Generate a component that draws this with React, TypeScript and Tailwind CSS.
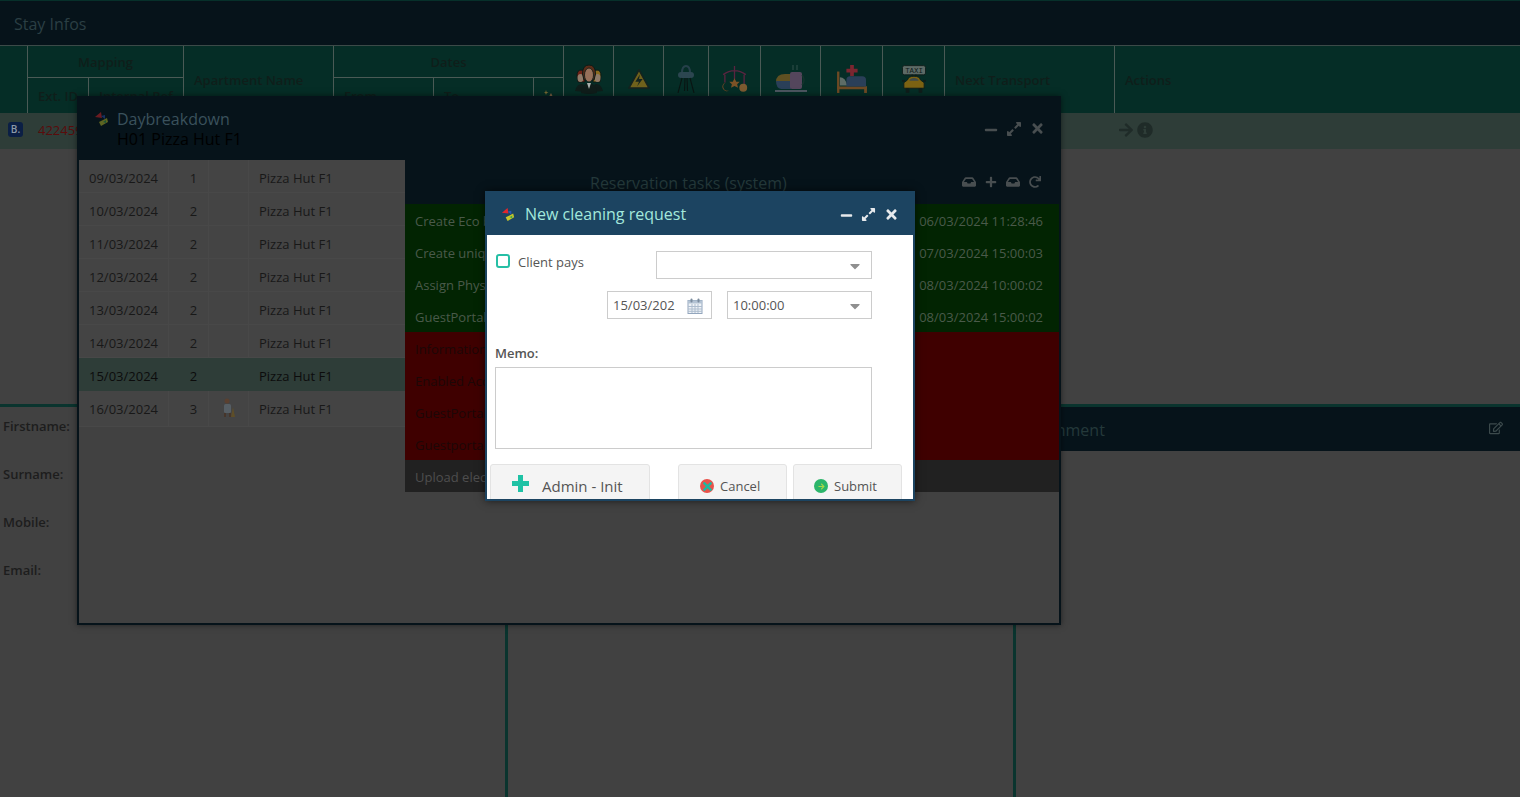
import { FaArrowRight, FaCaretDown, FaExpandAlt, FaInbox, FaInfoCircle, FaMinus, FaPlus, FaRedo, FaRegEdit, FaTimes } from "react-icons/fa";

const days = [
  { date: "09/03/2024", n: 1 },
  { date: "10/03/2024", n: 2 },
  { date: "11/03/2024", n: 2 },
  { date: "12/03/2024", n: 2 },
  { date: "13/03/2024", n: 2 },
  { date: "14/03/2024", n: 2 },
  { date: "15/03/2024", n: 2, active: true },
  { date: "16/03/2024", n: 3, cleaner: true },
];

const tasks = [
  { label: "Create Eco booking", time: "06/03/2024 11:28:46", done: true },
  { label: "Create unique code", time: "07/03/2024 15:00:03", done: true },
  { label: "Assign Physical unit", time: "08/03/2024 10:00:02", done: true },
  { label: "GuestPortal mail", time: "08/03/2024 15:00:02", done: true },
  { label: "Information mail", time: "", done: false },
  { label: "Enabled Access", time: "", done: false },
  { label: "GuestPortal reminder", time: "", done: false },
  { label: "Guestportal checkout", time: "", done: false },
];

function Logo({ size = 16, className }: { size?: number; className?: string }) {
  return (
    <svg width={size} height={size} viewBox="0 0 16 16" className={className}>
      <path d="M1 6 L7 1 L8 7 Z" fill="#e5262b" />
      <path d="M7 5 L11 4 L11 8 Z" fill="#2b57b8" />
      <path d="M5 11 L13 7 L14 11 L7 15 Z" fill="#c8c62a" />
      <path d="M9 11 L12 9 L12 12 Z" fill="#3aa655" />
    </svg>
  );
}

function People() {
  return (
    <svg width="30" height="30" viewBox="0 0 30 30">
      <path d="M3 12 Q3 6 7 6 Q11 6 11 12 L11 18 H4 Z" fill="#6e2418" stroke="#0d1a17" />
      <path d="M19 12 Q19 6 23 6 Q27 6 27 12 L26 18 H19 Z" fill="#8a6a20" stroke="#0d1a17" />
      <ellipse cx="6.5" cy="14" rx="3" ry="4" fill="#8f7a68" />
      <ellipse cx="23.5" cy="14" rx="3" ry="4" fill="#8f7a68" />
      <path d="M1 27 Q3 19 9 20 L12 28 Z M18 28 L21 20 Q27 19 29 27 Z" fill="#0f1d1a" />
      <path d="M8.5 10 Q8.5 1 15 1 Q21.5 1 21.5 10 L20 16 H10 Z" fill="#5a2c18" stroke="#0d1a17" />
      <ellipse cx="15" cy="11" rx="4.5" ry="7" fill="#96705a" stroke="#0d1a17" strokeWidth="0.8" />
      <path d="M7 29 Q8 19 15 19 Q22 19 23 29 Q15 31 7 29 Z" fill="#0f1d1a" />
      <path d="M13 19 L15 25 L17 19 Z" fill="#aab2ae" />
    </svg>
  );
}

function Danger() {
  return (
    <svg width="24" height="22" viewBox="0 0 26 24">
      <path d="M13 2 L24 22 L2 22 Z" fill="#6f611c" stroke="#14231f" strokeWidth="1.8" strokeLinejoin="round" />
      <path d="M14 7 L9 15 L13 15 L11 20 L17 12 L13 12 Z" fill="#14231f" />
    </svg>
  );
}

function HighChair() {
  return (
    <svg width="18" height="28" viewBox="0 0 18 28" fill="none">
      <path d="M5 8 Q5 1 9 1 Q13 1 13 8" stroke="#26404a" strokeWidth="2" />
      <rect x="1" y="7" width="16" height="6" rx="3" fill="#2c4650" />
      <path d="M5 13 L1 28 M13 13 L17 28 M8 13 L7.5 26 M10 13 L10.5 26" stroke="#0a1513" strokeWidth="1.1" />
    </svg>
  );
}

function BabyMobile() {
  return (
    <svg width="27" height="28" viewBox="0 0 30 32" fill="none">
      <path d="M15 1 V7 M2 11 Q15 2 28 11 M4 11 V20 M15 7 V16 M26 11 V22" stroke="#5a2440" strokeWidth="1.5" />
      <path d="M15 15 L17 19 L21 19 L18 22 L19 26 L15 24 L11 26 L12 22 L9 19 L13 19 Z" fill="#7c5226" />
      <circle cx="25" cy="26" r="4.5" fill="#7c5a30" />
      <path d="M5 20 A5 5 0 1 0 9 29 A4 4 0 1 1 5 20 Z" fill="#7c4a24" />
    </svg>
  );
}

function Breakfast() {
  return (
    <svg width="32" height="28" viewBox="0 0 32 28" fill="none">
      <path d="M1 17 Q1 9 10 9 L15 9 L15 17 Z" fill="#5f5022" />
      <path d="M1 16 H16 V24 H6 Q1 23 1 16 Z" fill="#2a3f58" />
      <rect x="15" y="7" width="12" height="17" rx="2" fill="#54465c" />
      <path d="M27 10 Q31 15 27 20" stroke="#14332c" strokeWidth="1.4" />
      <path d="M18 0 V5 M22 0 V5" stroke="#33504a" strokeWidth="1" />
      <rect x="0" y="25" width="32" height="2" fill="#4c5660" />
    </svg>
  );
}

function SickBed() {
  return (
    <svg width="30" height="28" viewBox="0 0 32 30" fill="none">
      <path d="M14 0 H18 V4 H22 V8 H18 V12 H14 V8 H10 V4 H14 Z" fill="#7c2630" />
      <rect x="0" y="7" width="2.5" height="23" fill="#6e4a24" />
      <rect x="0" y="23" width="32" height="3" fill="#6e4a24" />
      <rect x="29" y="23" width="3" height="7" fill="#6e4a24" />
      <path d="M3 13 Q9 13 11 22 H3 Z" fill="#5e6c66" />
      <path d="M10 23 V16 Q10 12 14 12 H27 Q31 12 31 16 V23 Z" fill="#2a3f58" />
    </svg>
  );
}

function Taxi() {
  return (
    <svg width="24" height="28" viewBox="0 0 26 30">
      <rect x="0.5" y="0.5" width="25" height="10" rx="2" fill="#5d6a66" stroke="#0f1d1a" />
      <text x="13" y="8" textAnchor="middle" fontSize="8" fontFamily="Liberation Mono, monospace" fill="#0f1d1a">TAXI</text>
      <path d="M11 10 V12 M15 10 V12" stroke="#0f1d1a" />
      <path d="M6 16 Q7 12 13 12 Q19 12 20 16 L24 19 V25 H2 V19 Z" fill="#7c6212" stroke="#0f1d1a" />
      <path d="M8 17 Q9 14 13 14 Q17 14 18 17 Z" fill="#3f4a48" />
      <rect x="0" y="16" width="3" height="2" fill="#0f1d1a" />
      <rect x="23" y="16" width="3" height="2" fill="#0f1d1a" />
      <rect x="4" y="25" width="4" height="5" rx="1" fill="#0f1d1a" />
      <rect x="18" y="25" width="4" height="5" rx="1" fill="#0f1d1a" />
    </svg>
  );
}

function Cleaner() {
  return (
    <svg width="14" height="20" viewBox="0 0 14 20">
      <circle cx="5" cy="3" r="2.5" fill="#5a4030" />
      <rect x="2" y="6" width="7" height="9" rx="1.5" fill="#565e64" />
      <rect x="2" y="15" width="2" height="4" fill="#46352a" />
      <rect x="7" y="15" width="2" height="4" fill="#46352a" />
      <path d="M11 9 L13 19 H9 Z" fill="#5e4e28" />
    </svg>
  );
}

function Sparkle() {
  return (
    <svg width="10" height="14" viewBox="0 0 10 14">
      <path d="M2 0 L2.6 2 L4.5 2.6 L2.6 3.2 L2 5 L1.4 3.2 L0 2.6 L1.4 2 Z" fill="#7a6c34" />
      <path d="M6 14 Q3 9 7 3 Q10 8 9 14 Z" fill="#7a6042" />
    </svg>
  );
}

function Calendar() {
  return (
    <svg width="16" height="16" viewBox="0 0 16 16" fill="none">
      <rect x="1" y="2.5" width="14" height="13" fill="#eef2f7" stroke="#93a6bd" />
      <rect x="1" y="2.5" width="14" height="3" fill="#b4c3d4" />
      <path d="M5 6 V15 M8 6 V15 M11 6 V15 M1 8.5 H15 M1 11 H15 M1 13.3 H15" stroke="#aebdce" />
      <rect x="3.5" y="0.5" width="2" height="4" rx="1" fill="#7b8c9e" />
      <rect x="10.5" y="0.5" width="2" height="4" rx="1" fill="#7b8c9e" />
    </svg>
  );
}

const headCell = "flex items-center border-l border-[#4a5a55] pt-[2px] text-[13px] font-semibold text-[#0f1e1a]";
const groupCell = "flex items-center justify-center border-b border-l border-[#4a5a55] pt-[3px] text-[13px] font-semibold text-[#0f1e1a]";
const iconCell = "row-span-2 flex items-center justify-center border-l border-[#4a5a55] pb-[2px]";

function StayTable() {
  return (
    <div className="grid grid-cols-[27px_61px_95px_150px_100px_100px_30px_50px_50px_45px_52px_60px_62px_62px_170px_1fr] grid-rows-[32px_35px] border-t border-[#3c4a48] bg-[#052d26]">
      <div className="row-span-2" />
      <div className={`${groupCell} col-span-2`}>Mapping</div>
      <div className={`${headCell} row-span-2 pl-[10px]`}>Apartment Name</div>
      <div className={`${groupCell} col-span-3`}>Dates</div>
      <div className={iconCell}><People /></div>
      <div className={iconCell}><Danger /></div>
      <div className={iconCell}><HighChair /></div>
      <div className={iconCell}><BabyMobile /></div>
      <div className={iconCell}><Breakfast /></div>
      <div className={iconCell}><SickBed /></div>
      <div className={iconCell}><Taxi /></div>
      <div className={`${headCell} row-span-2 pl-[10px]`}>Next Transport</div>
      <div className={`${headCell} row-span-2 pl-[10px]`}>Actions</div>
      <div className={`${headCell} pl-[10px]`}>Ext. ID</div>
      <div className={`${headCell} pl-[10px]`}>Internal Ref</div>
      <div className={`${headCell} pl-[10px]`}>From</div>
      <div className={`${headCell} pl-[10px]`}>To</div>
      <div className={`${headCell} justify-center`}><Sparkle /></div>
    </div>
  );
}

function StayRow() {
  return (
    <div className="flex h-9 items-center bg-[#2e3d38] pb-[3px]">
      <div className="ml-2 flex h-[15px] w-[15px] items-center justify-center rounded-[3px] bg-[#0b1f45] text-[10px] font-semibold text-[#8d9aa8]">B.</div>
      <span className="ml-[15px] mt-[3px] text-[13px] text-[#5a0c0c]">422459</span>
      <div className="ml-[1035px] flex items-center gap-[3px] text-[#1f2b28]">
        <FaArrowRight size={16} />
        <FaInfoCircle size={16} />
      </div>
    </div>
  );
}

function BottomPanels() {
  return (
    <div className="grid h-[393px] grid-cols-[508px_508px_1fr] border-t-[3px] border-[#0a342e]">
      <div className="border-r-[3px] border-[#0a342e] pl-[3px] pt-[10px] text-[13px] font-semibold text-[#1d1d1d]">
        <div className="h-12">Firstname:</div>
        <div className="h-12">Surname:</div>
        <div className="h-12">Mobile:</div>
        <div className="h-12">Email:</div>
      </div>
      <div className="border-r-[3px] border-[#0a342e]" />
      <div className="flex h-11 items-center justify-between bg-[#06131a] pl-[15px] pr-[17px] text-base text-[#24393a]">
        <span className="pt-[2px]">Comment</span>
        <FaRegEdit size={14} className="mb-[3px] text-[#3c4a4c]" />
      </div>
    </div>
  );
}

function DaybreakdownWindow() {
  return (
    <div className="absolute left-[77px] top-[96px] flex h-[529px] w-[984px] flex-col border-2 border-t-0 border-[#06131a] bg-[#414141] shadow-[0_0_6px_rgba(0,0,0,0.5)]">
      <div className="flex h-16 shrink-0 items-start bg-[#06131a] pl-[15px] pr-[14px] pt-[13px]">
        <div className="mt-[2px] w-[23px]"><Logo className="opacity-45" /></div>
        <div className="text-base leading-5">
          <div className="text-[#3a515c]">Daybreakdown</div>
          <div className="text-[#000000]">H01 Pizza Hut F1</div>
        </div>
        <div className="ml-auto mt-[11px] flex items-center gap-[8px] text-[#484e50]">
          <FaMinus size={14} className="mt-[3px]" />
          <FaExpandAlt size={16} />
          <FaTimes size={15} />
        </div>
      </div>
      <div className="flex items-start">
        <div className="w-[326px] shrink-0 text-[13px] text-[#181818]">
          {days.map((d) => (
            <div key={d.date} className={`flex border-b leading-[36px] ${d.cleaner ? "h-[36px]" : "h-[33px]"} ${d.active ? "border-[#2e3d38] bg-[#2e3d38] text-[#0c0c0c]" : "border-[#484848] bg-[#444444]"}`}>
              <div className={`h-full w-[90px] border-r pl-[10px] ${d.active ? "border-[#2e3d38]" : "border-[#484848]"}`}>{d.date}</div>
              <div className={`h-full w-10 border-r pl-[10px] text-center ${d.active ? "border-[#2e3d38]" : "border-[#484848]"}`}>{d.n}</div>
              <div className={`flex h-full w-10 justify-center border-r pt-[7px] ${d.active ? "border-[#2e3d38]" : "border-[#484848]"}`}>{d.cleaner && <Cleaner />}</div>
              <div className="pl-[10px]">Pizza Hut F1</div>
            </div>
          ))}
        </div>
        <div className="min-w-0 flex-1">
          <div className="flex h-[44px] items-start justify-between bg-[#06131a] pl-[185px] pr-[18px] pt-[11px]">
            <span className="text-base text-[#24393a]">Reservation tasks (system)</span>
            <div className="mt-[4px] flex items-center gap-[9px] text-[#484e50]">
              <FaInbox size={14} />
              <FaPlus size={12} />
              <FaInbox size={14} />
              <FaRedo size={12} />
            </div>
          </div>
          {tasks.map((t) => (
            <div key={t.label} className={`flex h-8 items-center justify-between pl-[10px] pr-[16px] pt-[3px] text-[13px] ${t.done ? "bg-[#022402] text-[#4a5a4a]" : "bg-[#3f0000] text-[#1c0707]"}`}>
              <span>{t.label}</span>
              <span>{t.time}</span>
            </div>
          ))}
          <div className="flex h-8 items-center bg-[#212121] pl-[10px] pt-[3px] text-[13px] text-[#4e4e4e]">Upload electronic ID</div>
        </div>
      </div>
    </div>
  );
}

function Field({ className, children }: { className: string; children?: React.ReactNode }) {
  return (
    <div className={`flex h-[28px] items-center border border-[#cccccc] bg-white pl-[5px] pt-[1px] text-[13px] text-[#555555] ${className}`}>
      {children}
    </div>
  );
}

function AdminPlus() {
  return (
    <svg width="17" height="17" viewBox="0 0 17 17" className="shrink-0">
      <path d="M6 0 H11 V6 H17 V11 H11 V17 H6 V11 H0 V6 H6 Z" fill="#1fc2a5" />
    </svg>
  );
}

function CleaningRequestWindow() {
  return (
    <div className="absolute left-[485px] top-[191px] h-[310px] w-[430px] overflow-hidden border-x-2 border-b-2 border-[#1c4461] bg-white shadow-[0_0_8px_rgba(0,0,0,0.6)]">
      <div className="flex h-11 items-center bg-[#1c4461] pl-[14px] pr-[14px] pt-[2px]">
        <Logo size={15} />
        <span className="ml-[9px] text-base text-[#a3e8dc]">New cleaning request</span>
        <div className="ml-auto flex items-center gap-[8px] text-[#e6e9ec]">
          <FaMinus size={13} className="mt-[3px]" />
          <FaExpandAlt size={15} />
          <FaTimes size={15} />
        </div>
      </div>
      <div className="pl-[8px] pr-[41px] pt-4">
        <div className="flex items-start">
          <div className="ml-[1px] mt-[3px] h-[14px] w-[14px] rounded-[3px] border-2 border-[#26bfa5]" />
          <span className="ml-[8px] mt-[2px] text-[13px] text-[#555555]">Client pays</span>
          <Field className="ml-auto w-[216px] justify-end pr-[8px]">
            <FaCaretDown size={16} className="text-[#8f8f8f]" />
          </Field>
        </div>
        <div className="mt-3 flex justify-end gap-[15px]">
          <Field className="w-[105px] justify-between pr-[8px]">
            <span>15/03/202</span>
            <Calendar />
          </Field>
          <Field className="w-[145px] justify-between pr-[8px]">
            <span>10:00:00</span>
            <FaCaretDown size={16} className="text-[#8f8f8f]" />
          </Field>
        </div>
        <div className="mt-[25px] text-[13px] font-semibold leading-[18px] text-[#555555]">Memo:</div>
        <div className="mt-[5px] h-[82px] border border-[#cccccc]" />
        <div className="mt-[15px] flex text-[#555555]">
          <button className="-ml-[5px] flex h-[44px] w-[160px] shrink-0 items-start gap-[13px] rounded-[3px] border border-[#e3e3e3] bg-[#f4f4f4] pl-[21px] pt-[10px] text-[15px]">
            <AdminPlus />
            <span className="leading-[22px]">Admin - Init</span>
          </button>
          <button className="ml-[28px] flex h-[44px] w-[109px] shrink-0 items-start gap-[6px] rounded-[3px] border border-[#e3e3e3] bg-[#f4f4f4] pl-[21px] pt-[12px] text-[13px]">
            <span className="mt-[2px] flex h-[14px] w-[14px] items-center justify-center rounded-full bg-[#e8524a]"><FaTimes size={13} className="text-[#1fb8a0]" /></span>
            <span className="leading-[18px]">Cancel</span>
          </button>
          <button className="ml-[6px] flex h-[44px] w-[109px] shrink-0 items-start gap-[6px] rounded-[3px] border border-[#e3e3e3] bg-[#f4f4f4] pl-[20px] pt-[12px] text-[13px]">
            <span className="mt-[2px] flex h-[14px] w-[14px] items-center justify-center rounded-full bg-[#2cb56a]"><FaArrowRight size={7} className="text-[#a8d84a]" /></span>
            <span className="leading-[18px]">Submit</span>
          </button>
        </div>
      </div>
    </div>
  );
}

export default function App() {
  return (
    <div className="relative h-[797px] w-full overflow-hidden bg-[#414141] font-['Open_Sans',sans-serif]">
      <div className="flex h-[45px] items-center border-t border-[#06302a] bg-[#06131a] pl-[14px] pt-[2px] text-base text-[#2b3f44]">Stay Infos</div>
      <StayTable />
      <StayRow />
      <div className="h-[255px]" />
      <BottomPanels />
      <DaybreakdownWindow />
      <CleaningRequestWindow />
    </div>
  );
}
